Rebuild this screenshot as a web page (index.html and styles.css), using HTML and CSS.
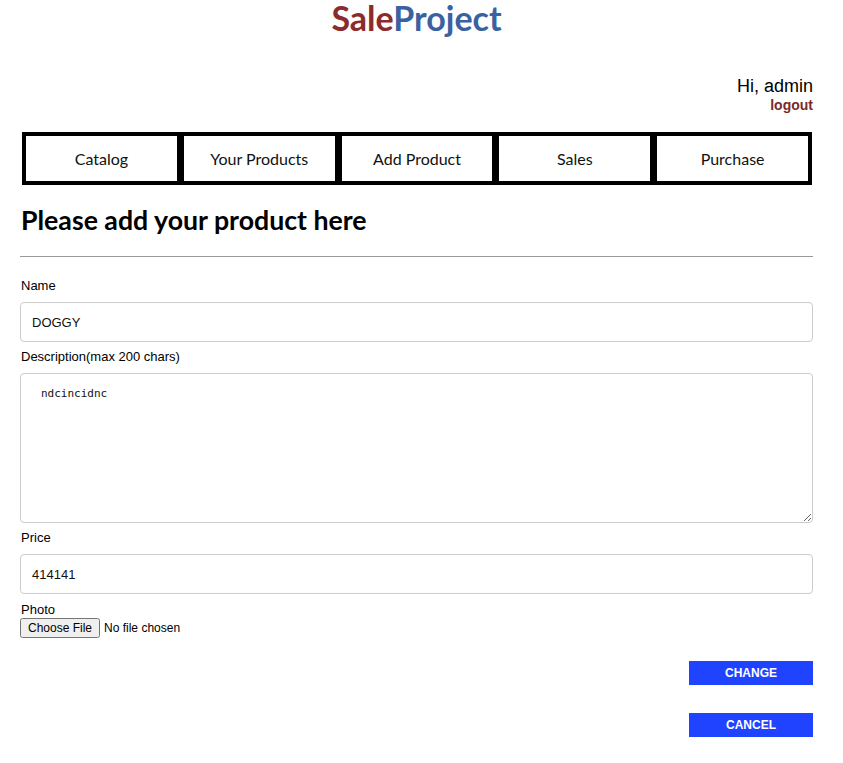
FILE: index.html
```html
<!DOCTYPE html>
<html>
<head>
<meta charset="utf-8">
<title>SaleProject</title>
<link rel="stylesheet" href="styles.css">
</head>
<body>
<div class="page">
  <header class="brand"><span class="sale">Sale</span><span class="project">Project</span></header>
  <div class="user">
    <div class="hi">Hi, admin</div>
    <a class="logout" href="#">logout</a>
  </div>
  <nav class="nav">
    <a class="nav-item" href="#">Catalog</a>
    <a class="nav-item" href="#">Your Products</a>
    <a class="nav-item" href="#">Add Product</a>
    <a class="nav-item" href="#">Sales</a>
    <a class="nav-item" href="#">Purchase</a>
  </nav>
  <h1 class="heading">Please add your product here</h1>
  <hr class="rule">
  <form class="form">
    <label class="label">Name</label>
    <input class="field" type="text" value="DOGGY">
    <label class="label">Description(max 200 chars)</label>
    <textarea class="area">ndcincidnc</textarea>
    <label class="label">Price</label>
    <input class="field" type="text" value="414141">
    <label class="label photo-label">Photo</label>
    <input class="file" type="file">
    <div class="actions">
      <button class="btn" type="button">CHANGE</button>
      <button class="btn" type="button">CANCEL</button>
    </div>
  </form>
</div>
</body>
</html>
```
FILE: styles.css
```css
html, body {
  margin: 0;
  padding: 0;
  background: #fff;
}
body {
  font-family: "Liberation Sans", Arial, sans-serif;
  color: #000;
}
.page {
  margin: 0 30px 0 20px;
}
.brand {
  font-family: Lato, "Open Sans", sans-serif;
  font-weight: bold;
  font-size: 34px;
  line-height: 33px;
  text-align: center;
  padding-top: 1px;
}
.sale { color: #8b2b2b; }
.project { color: #3a62a0; }
.user {
  margin-top: 42px;
  text-align: right;
}
.hi {
  font-size: 18px;
  line-height: 20px;
}
.logout {
  display: inline-block;
  font-size: 14px;
  font-weight: bold;
  line-height: 19px;
  color: #7a2a2a;
  text-decoration: none;
}
.nav {
  display: flex;
  margin: 17px 1px 0 2px;
  height: 53px;
}
.nav-item {
  flex: 1;
  display: flex;
  align-items: center;
  justify-content: center;
  border: 4px solid #000;
  margin-left: -1px;
  font-family: Lato, "Open Sans", sans-serif;
  font-size: 16px;
  color: #111;
  text-decoration: none;
}
.nav-item:first-child { margin-left: 0; }
.heading {
  font-family: Lato, "Open Sans", sans-serif;
  font-weight: bold;
  font-size: 26.7px;
  line-height: 30px;
  margin: 20px 0 0 1px;
}
.rule {
  border: 0;
  border-top: 1px solid #999;
  margin: 21px 0 0 0;
}
.form {
  display: flex;
  flex-direction: column;
  align-items: flex-start;
}
.label {
  font-size: 13px;
  line-height: 16px;
  margin-top: 21px;
  margin-left: 1px;
}
.field {
  box-sizing: border-box;
  width: 100%;
  height: 40px;
  margin-top: 8px;
  padding: 0 11px;
  border: 1px solid #ccc;
  border-radius: 4px;
  font-family: "Liberation Sans", Arial, sans-serif;
  font-size: 13px;
  color: #111;
}
.field + .label { margin-top: 7px; }
.area {
  box-sizing: border-box;
  width: 100%;
  height: 150px;
  margin-top: 8px;
  padding: 13px 20px;
  border: 1px solid #ccc;
  border-radius: 4px;
  font-family: "DejaVu Sans Mono", monospace;
  font-size: 11px;
  color: #111;
  resize: vertical;
}
.area + .label { margin-top: 7px; }
.photo-label { margin-top: 8px !important; }
.file {
  font-family: "Liberation Sans", Arial, sans-serif;
  font-size: 12px;
  margin: 0;
}
.actions {
  align-self: flex-end;
  display: flex;
  flex-direction: column;
  gap: 28px;
  margin-top: 23px;
}
.btn {
  width: 124px;
  height: 24px;
  border: 0;
  background: #1f43ff;
  color: #fff;
  font-family: "Liberation Sans", Arial, sans-serif;
  font-size: 12px;
  font-weight: bold;
  padding: 0;
}
```
